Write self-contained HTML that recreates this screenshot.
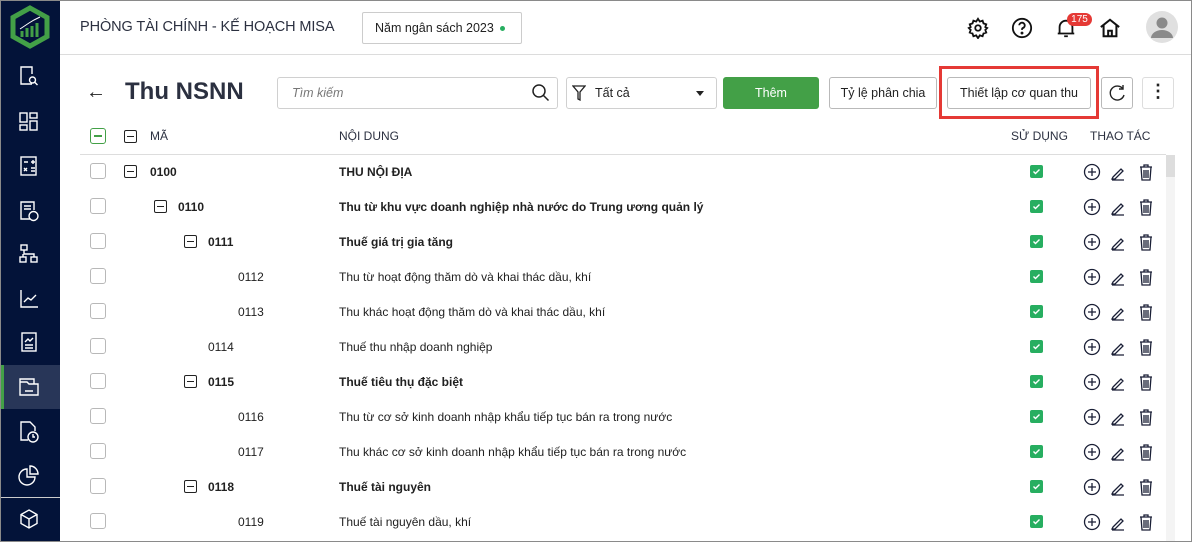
<!DOCTYPE html>
<html><head><meta charset="utf-8"><style>
*{box-sizing:border-box;margin:0;padding:0}
body{width:1192px;height:542px;overflow:hidden;font-family:"Liberation Sans",Arial,sans-serif;background:#fff;position:relative;color:#212121}
.frame{position:absolute;inset:0;border:1px solid #8a8a8a;pointer-events:none;z-index:9}
.side{position:absolute;left:0;top:0;width:60px;height:542px;background:#031339}
.side svg{position:absolute;left:18px}
.act{position:absolute;left:0;top:365px;width:60px;height:44px;background:#283658;border-left:4px solid #43a047}
.hdr{position:absolute;left:60px;top:0;right:0;height:55px;border-bottom:1px solid #dcdcdc}
.abs{position:absolute}
.btn{position:absolute;top:77px;height:32px;border:1px solid #b9b9b9;border-radius:3px;font-size:12.5px;line-height:30px;text-align:center;color:#222}
.row{position:absolute;left:80px;width:1086px;height:35px;font-size:12px}
.cb{position:absolute;left:10px;top:9px;width:16px;height:16px;border:1px solid #b8b8b8;border-radius:3px;background:#fff}
.mn{position:absolute;width:13px;height:13px;border:1.3px solid #222;border-radius:2px}
.mn:after{content:"";position:absolute;left:2px;right:2px;top:5px;height:1.3px;background:#222}
.code{position:absolute;top:11px}
.txt{position:absolute;left:259px;top:11px}
.b{font-weight:bold}
.chk{position:absolute;left:950px;top:11px;width:13px;height:13px;background:#27ae60;border-radius:2px}
.ic{position:absolute;left:1003px;top:8px}
</style></head><body>
<div class="side">
<svg style="left:8px;top:5px" width="44" height="44" viewBox="0 0 44 44"><path d="M22 3 L39 12.5 V31.5 L22 41 L5 31.5 V12.5 Z" fill="none" stroke="#43a047" stroke-width="5"/><path d="M14 32v-6M19 32v-9M24 32v-11M29 32v-14" stroke="#43a047" stroke-width="3"/><path d="M12 24 L21 18 L26 15 L32 12" stroke="#fff" stroke-width="1"/></svg>
<svg style="top:65px" width="22" height="22" viewBox="0 0 22 22" fill="none" stroke="#fff" stroke-width="1.4"><path d="M14 19H3V2h11v7"/><circle cx="14.5" cy="15" r="3"/><path d="M16.5 17l3 3"/></svg>
<svg style="top:111px" width="22" height="22" viewBox="0 0 22 22" fill="none" stroke="#fff" stroke-width="1.4"><rect x="2" y="2" width="7" height="9"/><rect x="2" y="14" width="7" height="5"/><rect x="12" y="2" width="7" height="5"/><rect x="12" y="10" width="7" height="9"/></svg>
<svg style="top:155px" width="22" height="22" viewBox="0 0 22 22" fill="none" stroke="#fff" stroke-width="1.4"><rect x="3" y="2" width="15" height="18"/><path d="M6 7h4M13 7h4M15 5v4M6 13l3 3M9 13l-3 3M13 13h4M13 16h4"/></svg>
<svg style="top:200px" width="22" height="22" viewBox="0 0 22 22" fill="none" stroke="#fff" stroke-width="1.4"><path d="M12 19H3V2h13v8M6 6h7M6 9h7"/><circle cx="15.5" cy="16" r="4.5"/></svg>
<svg style="top:243px" width="22" height="22" viewBox="0 0 22 22" fill="none" stroke="#fff" stroke-width="1.4"><rect x="3" y="2" width="6" height="5"/><rect x="2" y="14" width="6" height="5"/><rect x="13" y="14" width="6" height="5"/><path d="M6 7v4h10v3M5 11v3"/></svg>
<svg style="top:288px" width="22" height="22" viewBox="0 0 22 22" fill="none" stroke="#fff" stroke-width="1.4"><path d="M3 2v17h17M6 14l4-4 3 2 5-5"/></svg>
<svg style="top:331px" width="22" height="22" viewBox="0 0 22 22" fill="none" stroke="#fff" stroke-width="1.4"><rect x="4" y="2" width="14" height="18"/><path d="M7 11l3-3 2 2 3-3M7 14h8M7 17h8"/></svg>
<div class="act"></div>
<svg style="top:376px;left:18px" width="22" height="22" viewBox="0 0 22 22" fill="none" stroke="#fff" stroke-width="1.4"><path d="M2 6h7l2 2h9v11H2zM2 6V3h14v5M7 15h8"/></svg>
<svg style="top:420px" width="22" height="24" viewBox="0 0 22 24" fill="none" stroke="#fff" stroke-width="1.4"><path d="M10 20H3V2h9l5 5v4"/><circle cx="15" cy="17" r="5"/><path d="M15 14v3h2"/></svg>
<svg style="top:464px" width="22" height="22" viewBox="0 0 22 22" fill="none" stroke="#fff" stroke-width="1.4"><path d="M9 5a8 8 0 1 0 8 8H9z"/><path d="M12 2a8 8 0 0 1 8 8h-8z"/></svg>
<div class="abs" style="left:0;top:497px;width:60px;height:1px;background:#ccc"></div>
<svg style="top:508px" width="22" height="22" viewBox="0 0 22 22" fill="none" stroke="#fff" stroke-width="1.4"><path d="M11 2l8 4.5v9L11 20l-8-4.5v-9zM3 6.5l8 4.5 8-4.5M11 11v9"/></svg>
</div>
<div class="hdr">
<div class="abs" style="left:20px;top:19px;font-size:14.5px;color:#2b3040;letter-spacing:-0.1px">PHÒNG TÀI CHÍNH - KẾ HOẠCH MISA</div>
<div class="abs" style="left:302px;top:12px;width:160px;height:32px;border:1px solid #ccc;border-radius:2px;font-size:12.5px;line-height:30px;padding-left:12px">Năm ngân sách 2023 <span style="display:inline-block;width:5px;height:5px;border-radius:50%;background:#27ae60;vertical-align:middle;margin-left:3px"></span></div>
<svg class="abs" style="left:907px;top:17px" width="22" height="22" viewBox="0 0 24 24" fill="none" stroke="#111" stroke-width="2"><circle cx="12" cy="12" r="3"/><path d="M12 2l2 3 3-1 1 3 3 1-1 3 2 1-2 2 1 3-3 1-1 3-3-1-2 3-2-3-3 1-1-3-3-1 1-3-2-2 2-1-1-3 3-1 1-3 3 1z"/></svg>
<svg class="abs" style="left:951px;top:17px" width="22" height="22" viewBox="0 0 24 24" fill="none" stroke="#111" stroke-width="2"><circle cx="12" cy="12" r="10"/><path d="M9 9a3 3 0 1 1 4 3c-1 .5-1 1-1 2"/><circle cx="12" cy="17.5" r=".6" fill="#111"/></svg>
<svg class="abs" style="left:995px;top:17px" width="22" height="22" viewBox="0 0 24 24" fill="none" stroke="#111" stroke-width="2"><path d="M5 18V11a7 7 0 0 1 14 0v7zM3 18h18M10 21h4"/></svg>
<div class="abs" style="left:1007px;top:13px;width:25px;height:13px;background:#e53935;border-radius:7px;color:#fff;font-size:10px;line-height:13px;text-align:center">175</div>
<svg class="abs" style="left:1039px;top:17px" width="22" height="22" viewBox="0 0 24 24" fill="none" stroke="#111" stroke-width="2.2"><path d="M2 11L12 3l10 8M5 9v12h14V9M10 21v-6h4v6"/></svg>
<svg class="abs" style="left:1086px;top:11px" width="32" height="32" viewBox="0 0 32 32"><circle cx="16" cy="16" r="16" fill="#e0e0e0"/><circle cx="16" cy="12" r="5.5" fill="#8a8a8a"/><path d="M5 27a11 8 0 0 1 22 0z" fill="#8a8a8a"/></svg>
</div>
<div class="abs" style="left:86px;top:81px;font-size:20px">←</div>
<div class="abs" style="left:125px;top:78px;font-size:24px;font-weight:bold;color:#2b3040">Thu NSNN</div>
<div class="btn" style="left:277px;width:281px;border-color:#d0d0d0;text-align:left;padding-left:14px;font-style:italic;color:#777">Tìm kiếm</div>
<svg class="abs" style="left:531px;top:83px" width="20" height="20" viewBox="0 0 20 20" fill="none" stroke="#222" stroke-width="1.5"><circle cx="8" cy="8" r="6"/><path d="M12.5 12.5l5 5"/></svg>
<div class="btn" style="left:566px;width:151px;border-color:#d0d0d0;text-align:left;padding-left:28px">Tất cả</div>
<svg class="abs" style="left:572px;top:85px" width="14" height="16" viewBox="0 0 14 16" fill="none" stroke="#222" stroke-width="1.3"><path d="M1 1h12L8 7v8l-2-1V7z"/></svg>
<div class="abs" style="left:696px;top:91px;border-left:4px solid transparent;border-right:4px solid transparent;border-top:5px solid #222"></div>
<div class="btn" style="left:723px;width:96px;background:#43a047;border-color:#43a047;color:#fff">Thêm</div>
<div class="btn" style="left:829px;width:108px">Tỷ lệ phân chia</div>
<div class="abs" style="left:939px;top:66px;width:160px;height:53px;border:3px solid #e53935"></div>
<div class="btn" style="left:947px;width:144px">Thiết lập cơ quan thu</div>
<div class="btn" style="left:1101px;width:32px"></div>
<svg class="abs" style="left:1107px;top:83px" width="20" height="20" viewBox="0 0 20 20" fill="none" stroke="#222" stroke-width="1.4"><path d="M16 6A7 7 0 1 0 17 12"/><path d="M16 2v4h-4"/></svg>
<div class="btn" style="left:1142px;width:32px;border-color:#ddd;font-weight:bold;font-size:18px;line-height:26px">⋮</div>
<div class="abs" style="left:80px;top:154px;width:1086px;height:1px;background:#ddd"></div>
<div class="row" style="top:119px;color:#2b3040">
<div class="cb" style="border-color:#43a047"><div style="position:absolute;left:3px;right:3px;top:6px;height:1.5px;background:#43a047"></div></div>
<div class="mn" style="left:44px;top:11px"></div>
<div class="code" style="left:70px;top:10px">MÃ</div>
<div class="txt" style="top:10px">NỘI DUNG</div>
<div class="abs" style="left:931px;top:10px">SỬ DỤNG</div>
<div class="abs" style="left:1010px;top:10px">THAO TÁC</div>
</div>
<div class="abs" style="left:1166px;top:155px;width:9px;height:387px;background:#f4f4f4"></div>
<div class="abs" style="left:1166px;top:155px;width:9px;height:22px;background:#ddd"></div>
<div id="rows"></div>
<div class="frame"></div>
<script>
var d=[[0,"0100","THU NỘI ĐỊA",1,1],[1,"0110","Thu từ khu vực doanh nghiệp nhà nước do Trung ương quản lý",1,1],[2,"0111","Thuế giá trị gia tăng",1,1],[3,"0112","Thu từ hoạt động thăm dò và khai thác dầu, khí",0,0],[3,"0113","Thu khác hoạt động thăm dò và khai thác dầu, khí",0,0],[2,"0114","Thuế thu nhập doanh nghiệp",0,0],[2,"0115","Thuế tiêu thụ đặc biệt",1,1],[3,"0116","Thu từ cơ sở kinh doanh nhập khẩu tiếp tục bán ra trong nước",0,0],[3,"0117","Thu khác cơ sở kinh doanh nhập khẩu tiếp tục bán ra trong nước",0,0],[2,"0118","Thuế tài nguyên",1,1],[3,"0119","Thuế tài nguyên dầu, khí",0,0]];
var ic='<svg class="ic" width="80" height="20" viewBox="0 0 80 20" fill="none" stroke="#1a1f36" stroke-width="1.3"><circle cx="9" cy="10" r="7.5"/><path d="M9 6v8M5 10h8"/><path d="M30 15l8-8 2 2-8 8h-3zM29 18h12"/><path d="M57 5h12M61 5V3h4v2M58 5l1 13h8l1-13M61 8v8M63 8v8M65 8v8"/></svg>';
var h='';d.forEach(function(r,i){var y=154+i*35;var cx=[70,98,128,158][r[0]];var mnx=[44,74,104][r[0]];
h+='<div class="row" style="top:'+y+'px"><div class="cb"></div>'+(r[3]?'<div class="mn" style="left:'+mnx+'px;top:11px"></div>':'')+'<div class="code'+(r[4]?' b':'')+'" style="left:'+cx+'px">'+r[1]+'</div><div class="txt'+(r[4]?' b':'')+'">'+r[2]+'</div><div class="chk"><svg width="13" height="13" viewBox="0 0 13 13"><path d="M3.5 6.5l2 2 4-4" stroke="#fff" stroke-width="1.4" fill="none"/></svg></div>'+ic+'</div>';});
document.getElementById('rows').innerHTML=h;
</script>
</body></html>
